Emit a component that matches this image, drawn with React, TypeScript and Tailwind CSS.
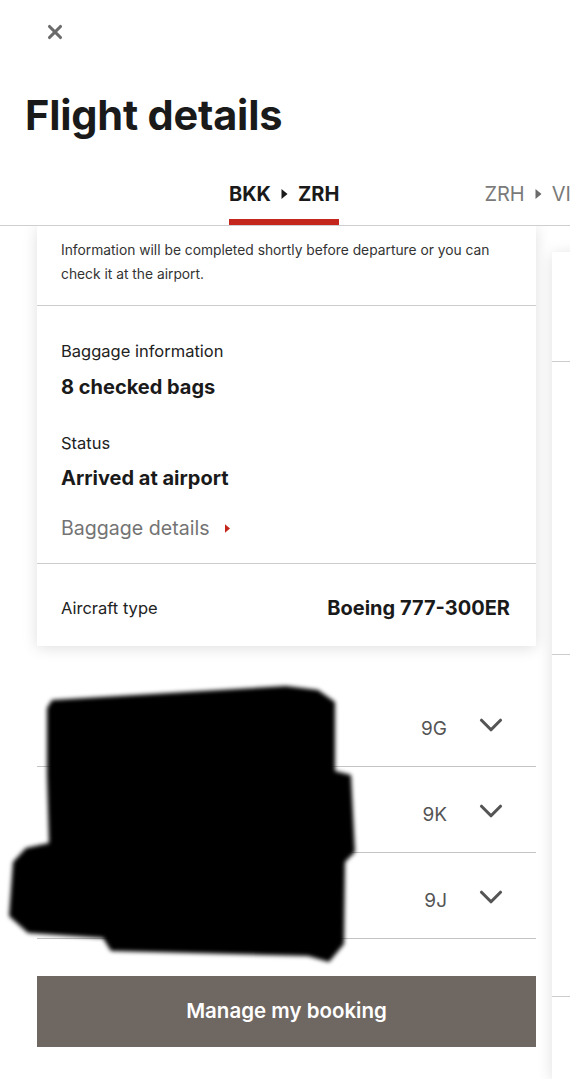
import { X, ChevronDown } from 'lucide-react';

const font = { fontFamily: 'Inter, "Liberation Sans", sans-serif' };

function Tri({ className }: { className?: string }) {
  return (
    <svg viewBox="0 0 6 10" className={className} fill="currentColor">
      <path d="M0 0 L6 5 L0 10 Z" />
    </svg>
  );
}

const seats = ['9G', '9K', '9J'];

export default function App() {
  return (
    <div className="relative w-[570px] h-[1080px] bg-white overflow-hidden text-[#1a1a1a]" style={font}>
      {/* header */}
      <div className="pl-[44px] pt-[21px]">
        <X className="w-[22px] h-[22px] text-[#6b6b6b]" strokeWidth={3.4} />
      </div>
      <h1 className="pl-[25px] mt-[48px] text-[41.5px] leading-[48px] font-bold tracking-[-0.2px]">Flight details</h1>

      {/* tabs */}
      <div className="mt-[43px] flex border-b border-[#cfcfcf] h-[44px]">
        <div className="w-[229px] shrink-0" />
        <div className="flex flex-col items-center">
          <div className="flex items-center gap-[10px] text-[20px] leading-[24px] font-bold">
            <span>BKK</span>
            <Tri className="w-[7px] h-[10px]" />
            <span>ZRH</span>
          </div>
          <div className="mt-auto h-[6px] w-full bg-[#c4261d]" />
        </div>
        <div className="w-[145px] shrink-0" />
        <div className="flex items-center gap-[10px] h-[24px] text-[20px] leading-[24px] text-[#7a7a7a] whitespace-nowrap">
          <span>ZRH</span>
          <Tri className="w-[7px] h-[10px] text-[#6b6b6b]" />
          <span>VIE</span>
        </div>
      </div>

      {/* carousel */}
      <div className="flex gap-[16px] pl-[37px] overflow-hidden h-[853px]">
        <div className="w-[499px] shrink-0 flex flex-col">
          <div className="bg-white shadow-[0_2px_14px_rgba(0,0,0,0.13)]">
            <p className="px-[24px] pt-[12px] pb-[19px] text-[13.8px] leading-[24px] text-[#333]">
              Information will be completed shortly before departure or you can check it at the airport.
            </p>
            <div className="border-t border-[#cccccc] px-[24px] pt-[33px] pb-[21px]">
              <div className="text-[16.5px] leading-[24px] text-[#222]">Baggage information</div>
              <div className="mt-[10px] text-[20px] leading-[28px] font-bold">8 checked bags</div>
              <div className="mt-[30px] text-[16.5px] leading-[24px] text-[#222]">Status</div>
              <div className="mt-[9px] text-[20px] leading-[28px] font-bold">Arrived at airport</div>
              <div className="mt-[22px] flex items-center gap-[15px] text-[19.6px] leading-[28px] text-[#747474]">
                <span>Baggage details</span>
                <Tri className="w-[5px] h-[9px] text-[#c4261d]" />
              </div>
            </div>
            <div className="border-t border-[#cccccc] px-[24px] pr-[26px] h-[83px] pt-[6px] flex items-center justify-between">
              <span className="text-[16.5px] text-[#222]">Aircraft type</span>
              <span className="text-[20px] font-bold">Boeing 777-300ER</span>
            </div>
          </div>

          <div className="mt-[35px]">
            {seats.map((s) => (
              <div key={s} className="h-[86px] border-b border-[#c4c4c4] flex items-center justify-end pr-[26px]">
                <span className="mt-[12px] text-[19px] text-[#555]">{s}</span>
                <ChevronDown className="ml-[25px] mt-[2px] w-[38px] h-[38px] text-[#555]" strokeWidth={2} />
              </div>
            ))}
          </div>

          <button className="mt-[37px] h-[71px] w-full bg-[#6f6762] text-white text-[20.5px] font-semibold">
            Manage my booking
          </button>
        </div>

        <div className="w-[300px] shrink-0 mt-[26px] bg-white shadow-[0_2px_14px_rgba(0,0,0,0.13)] flex flex-col">
          <div className="h-[110px] border-b border-[#cccccc]" />
          <div className="h-[293px] border-b border-[#cccccc]" />
          <div className="h-[342px] border-b border-[#cccccc]" />
        </div>
      </div>

      {/* redaction */}
      <svg className="absolute left-0 top-0 pointer-events-none" width="570" height="1080" viewBox="0 0 570 1080">
        <defs>
          <filter id="blur" x="-10%" y="-10%" width="120%" height="120%">
            <feGaussianBlur stdDeviation="2" />
          </filter>
        </defs>
        <path
          filter="url(#blur)"
          fill="#000"
          d="M52 700 L286 686 L318 690 L335 702 L335 771 L351 775 L355 852 L345 862 L344 944 L329 962 L308 956 L111 951 L103 938 L28 933 L9 916 L13 862 L26 848 L49 843 L47 775 L47 708 Z"
        />
      </svg>
    </div>
  );
}
